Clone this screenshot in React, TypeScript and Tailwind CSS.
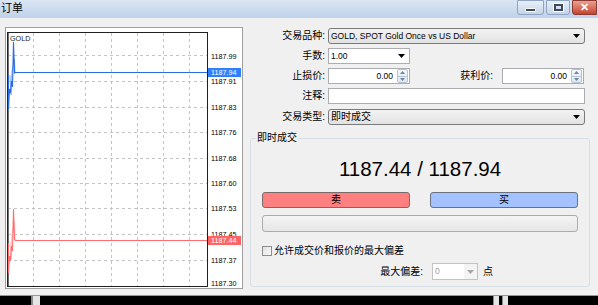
import React from "react";

const FONT = "font-['Liberation_Sans','Noto_Sans_CJK_SC',sans-serif]";

function Chart() {
  const gridX = [33, 59, 85, 111, 137, 163, 189];
  const gridY = [54, 80, 106, 131, 157, 182, 207, 233, 259];
  const labels: [number, string][] = [
    [55, "1187.99"],
    [80, "1187.91"],
    [106, "1187.83"],
    [131, "1187.76"],
    [157, "1187.68"],
    [182, "1187.60"],
    [207, "1187.53"],
    [233, "1187.45"],
    [259, "1187.37"],
    [282, "1187.30"],
  ];
  return (
    <svg width={236} height={260} viewBox="6 27 236 260" className="block">
      <rect x={6} y={27} width={236} height={260} fill="#ffffff" />
      {gridX.map((x) => (
        <line key={"gx" + x} x1={x + 0.5} y1={32} x2={x + 0.5} y2={285} stroke="#c4c4c4" strokeDasharray="3 3" />
      ))}
      {gridY.map((y) => (
        <line key={"gy" + y} x1={8} y1={y + 0.5} x2={207} y2={y + 0.5} stroke="#c4c4c4" strokeDasharray="3 3" />
      ))}
      <rect x={7.5} y={31.5} width={200} height={254} fill="none" stroke="#202020" />
      <line x1={8.5} y1={32} x2={8.5} y2={285} stroke="#707070" />
      {labels.map(([y, t]) => (
        <text key={t} x={211} y={y + 2.6} fontSize={7.2} fill="#000" fontFamily="Liberation Sans, sans-serif">
          {t}
        </text>
      ))}
      <text x={10} y={39.5} fontSize={7.2} fill="#222" fontFamily="Liberation Sans, sans-serif">
        GOLD
      </text>
      {/* ask (blue) */}
      <path d="M10 74 L11 94 L12 70 L14.5 58 L15 72" fill="none" stroke="#8fb4f0" strokeWidth={1} />
      <path
        d="M8.5 75 L8.5 108 L9.5 88 L10.5 92 L11.5 80 L12.5 86 L13.5 41 L14.5 72 L15.5 71.5 L207 71.5"
        fill="none"
        stroke="#2a6be0"
        strokeWidth={1.1}
      />
      <rect x={208} y={67} width={33} height={9} fill="#2f7fff" />
      <text x={211} y={74.4} fontSize={7.2} fill="#fff" fontFamily="Liberation Sans, sans-serif">
        1187.94
      </text>
      {/* bid (red) */}
      <path d="M10 240 L11 258 L12 233 L14.5 221 L15 240" fill="none" stroke="#ffc0c0" strokeWidth={1} />
      <path
        d="M8.5 242 L8.5 272 L9.5 255 L10.5 260 L11.5 245 L12.5 250 L13.5 208 L14.5 238 L15.5 239.5 L207 239.5"
        fill="none"
        stroke="#ff6e6e"
        strokeWidth={1.1}
      />
      <rect x={208} y={235} width={33} height={9} fill="#ff6464" />
      <text x={211} y={242.4} fontSize={7.2} fill="#fff" fontFamily="Liberation Sans, sans-serif">
        1187.44
      </text>
    </svg>
  );
}

function Arrow({ color = "#000" }: { color?: string }) {
  return (
    <svg width={7} height={4} viewBox="0 0 7 4" className="block">
      <path d="M0 0 L7 0 L3.5 4 Z" fill={color} />
    </svg>
  );
}

function Spinner() {
  return (
    <div className="flex flex-col w-[11px] h-[14px] mr-[1px] border border-[#b7c4d4] rounded-[2px] bg-gradient-to-b from-[#f4f7fb] to-[#dfe7f1]">
      <div className="flex-1 flex items-center justify-center border-b border-[#b7c4d4]">
        <svg width={5} height={3} viewBox="0 0 5 3"><path d="M0 3 L5 3 L2.5 0 Z" fill="#6b84a6" /></svg>
      </div>
      <div className="flex-1 flex items-center justify-center">
        <svg width={5} height={3} viewBox="0 0 5 3"><path d="M0 0 L5 0 L2.5 3 Z" fill="#6b84a6" /></svg>
      </div>
    </div>
  );
}

function Label({ children, w = "w-[75px]" }: { children: React.ReactNode; w?: string }) {
  return <div className={`${w} text-right text-[10px] leading-[16px] text-black shrink-0`}>{children}</div>;
}

export default function App() {
  return (
    <div className={`w-[598px] h-[305px] flex flex-col bg-[#f0f0f0] overflow-hidden ${FONT}`}>
      {/* Title bar */}
      <div className="h-[18px] flex items-start justify-between bg-gradient-to-b from-[#dbe6f4] to-[#bfd2ea] shrink-0">
        <div className="pl-[1px] text-[11px] leading-[17px] text-black">订单</div>
        <div className="flex items-start gap-[2px] mr-[1px]">
          <div className="w-[27px] h-[15px] rounded-b-[3px] border border-[#8ea4c2] bg-gradient-to-b from-[#e8eff8] to-[#c4d4e9] flex items-center justify-center">
            <div className="w-[11px] h-[4px] mt-[4px] bg-[#3d4a5c] border border-white rounded-[1px]" />
          </div>
          <div className="w-[24px] h-[15px] rounded-b-[3px] border border-[#8ea4c2] bg-gradient-to-b from-[#e8eff8] to-[#c4d4e9] flex items-center justify-center">
            <div className="w-[9px] h-[7px] border-[2px] border-[#3d4a5c] outline outline-1 outline-white" />
          </div>
          <div className="w-[25px] h-[15px] rounded-bl-[3px] border border-[#8b3a30] bg-gradient-to-b from-[#e8a093] to-[#c6412f] flex items-center justify-center">
            <span className="text-white text-[11px] font-bold leading-none">✕</span>
          </div>
        </div>
      </div>

      {/* Body */}
      <div className="h-[277px] flex flex-row pl-[5px] pt-[9px] shrink-0">
        <div className="w-[238px] h-[262px] border border-[#a0a0a0] bg-white shrink-0">
          <Chart />
        </div>

        <div className="w-[340px] ml-[7px] flex flex-col pt-[1px]">
          {/* Row 1 */}
          <div className="flex items-center h-[16px]">
            <Label>交易品种:</Label>
            <div className="ml-[3px] w-[257px] h-[16px] flex items-center justify-between border border-[#7a7a7a] rounded-[3px] bg-gradient-to-b from-[#f3f3f3] to-[#e2e2e2] pl-[2px] pr-[4px]">
              <span className="text-[8.5px] text-black whitespace-nowrap">GOLD, SPOT Gold Once vs US Dollar</span>
              <Arrow />
            </div>
          </div>
          {/* Row 2 */}
          <div className="flex items-center h-[16px] mt-[4px]">
            <Label>手数:</Label>
            <div className="ml-[3px] w-[82px] h-[16px] flex items-center justify-between border border-[#abadb3] bg-white pl-[2px] pr-[4px]">
              <span className="text-[8.5px] text-black">1.00</span>
              <Arrow />
            </div>
          </div>
          {/* Row 3 */}
          <div className="flex items-center h-[16px] mt-[4px]">
            <Label>止损价:</Label>
            <div className="ml-[3px] w-[82px] h-[16px] flex items-center justify-end border border-[#abadb3] bg-white">
              <span className="text-[8.5px] text-black mr-[4px]">0.00</span>
              <Spinner />
            </div>
            <Label w="w-[83px]">获利价:</Label>
            <div className="ml-[9px] w-[82px] h-[16px] flex items-center justify-end border border-[#abadb3] bg-white">
              <span className="text-[8.5px] text-black mr-[4px]">0.00</span>
              <Spinner />
            </div>
          </div>
          {/* Row 4 */}
          <div className="flex items-center h-[16px] mt-[4px]">
            <Label>注释:</Label>
            <div className="ml-[3px] w-[257px] h-[16px] border border-[#abadb3] bg-white" />
          </div>
          {/* Row 5 */}
          <div className="flex items-center h-[16px] mt-[5px]">
            <Label>交易类型:</Label>
            <div className="ml-[3px] w-[257px] h-[16px] flex items-center justify-between border border-[#7a7a7a] rounded-[3px] bg-gradient-to-b from-[#f3f3f3] to-[#e2e2e2] pl-[2px] pr-[4px]">
              <span className="text-[10px] leading-none text-black">即时成交</span>
              <Arrow />
            </div>
          </div>

          {/* Group box */}
          <div className="relative mt-[13px] w-[340px] h-[149px] border border-[#d5dfe5] rounded-[3px] flex flex-col px-[11px]">
            <div className="absolute left-[5px] top-[-7px] px-[1px] bg-[#f0f0f0] text-[10px] leading-[12px] text-black">即时成交</div>
            <div className="mt-[18px] h-[24px] text-center text-[20.5px] leading-[24px] text-black">1187.44 / 1187.94</div>
            <div className="mt-[11px] grid grid-cols-2 gap-[20px]">
              <div className="h-[16px] border border-[#7a6a6a] rounded-[3px] bg-[#ff8080] flex items-center justify-center text-[10px] text-black leading-none">卖</div>
              <div className="h-[16px] border border-[#6a7280] rounded-[3px] bg-[#a3c2ff] flex items-center justify-center text-[10px] text-black leading-none">买</div>
            </div>
            <div className="mt-[7px] h-[17px] border border-[#acacac] rounded-[3px] bg-gradient-to-b from-[#f4f4f4] to-[#e6e6e6]" />
            <div className="mt-[13px] flex items-center h-[12px]">
              <div className="w-[10px] h-[10px] border border-[#8f8f8f] bg-gradient-to-br from-[#e0e0e0] to-[#fbfbfb]" />
              <span className="ml-[2px] text-[10px] leading-none text-black">允许成交价和报价的最大偏差</span>
            </div>
            <div className="mt-[6px] flex items-center h-[17px]">
              <div className="w-[161px] text-right text-[10px] leading-none text-black">最大偏差:</div>
              <div className="ml-[9px] w-[46px] h-[17px] flex items-center border border-[#c3c3c3] bg-white">
                <div className="w-[31px] h-full bg-white flex items-center pl-[2px] text-[8.5px] text-[#a0a0a0]">0</div>
                <div className="flex-1 h-full bg-[#f4f4f4] flex items-center justify-center">
                  <Arrow color="#a8a8a8" />
                </div>
              </div>
              <span className="ml-[5px] text-[10px] leading-none text-black">点</span>
            </div>
          </div>
        </div>
      </div>

      {/* bottom */}
      <div className="h-[1px] bg-[#3cb6e3] shrink-0" />
      <div className="h-[9px] bg-black flex flex-row shrink-0">
        <div className="ml-[31px] w-[9px] h-full bg-[#e4e4e4] border-l-[2px] border-[#8a8a8a]" />
        <div className="ml-[453px] w-[6px] h-full bg-[#e4e4e4] border-l border-[#8a8a8a]" />
        <div className="ml-[3px] w-[6px] h-full bg-[#e4e4e4] border-l border-[#8a8a8a]" />
      </div>
    </div>
  );
}
